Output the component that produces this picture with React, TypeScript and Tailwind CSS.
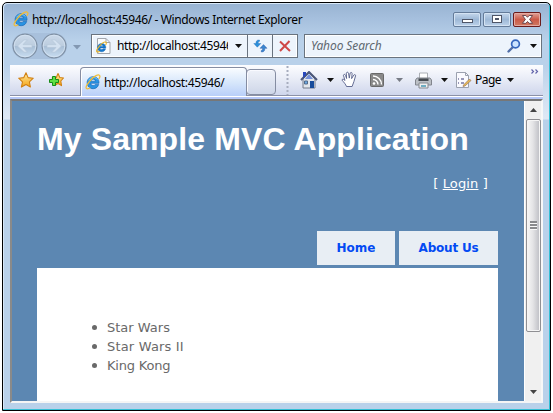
import React from "react";

const UI = "font-['Noto_Sans','Open_Sans',sans-serif]";

function Caret({ dim = false }: { dim?: boolean }) {
  return (
    <svg width="7" height="4" viewBox="0 0 7 4" className="shrink-0">
      <path d="M0 0h7L3.5 4z" fill={dim ? "#777b85" : "#111"} />
    </svg>
  );
}

function IeLogo({ size = 16 }: { size?: number }) {
  return (
    <svg width={size} height={size} viewBox="0 0 16 16" className="shrink-0">
      <path fillRule="evenodd" d="M14 9.300H5.800c.1 1.400 1.100 2.200 2.500 2.200 1 0 1.600-.4 2-1.100h3.400C12.900 13 11 14.700 8.200 14.700 4.700 14.700 2.100 12.200 2.100 8.700 2.100 5.200 4.700 2.700 8.200 2.700c3.700 0 6 2.600 5.800 6.600zM5.900 7.200h4.500C10.200 5.900 9.400 5.200 8.200 5.200S6.200 5.900 5.900 7.200z" fill="#2a93e2" stroke="#0f62b4" strokeWidth=".6" />
      <path d="M3.600 6.300C4.500 4.500 6.200 3.500 8.200 3.500c1.800 0 3.300.7 4.100 2" fill="none" stroke="#8ad6fa" strokeWidth=".9" />
      <path d="M13.800 5c1.300-2.100 1.400-3.300.6-3.800-1.500-1-5.500 1.200-8.900 5C2.100 10.100.4 13.500 1.500 14.500c.8.600 2.300.2 3.800-.7" fill="none" stroke="#f0bd38" strokeWidth="1.300" />
    </svg>
  );
}

function RoundArrow({ forward = false }: { forward?: boolean }) {
  return (
    <svg width="26" height="26" viewBox="0 0 26 26" className="shrink-0">
      <defs>
        <linearGradient id={forward ? "rf" : "rb"} x1="0" y1="0" x2="0" y2="1">
          <stop offset="0" stopColor="#cbd9e9" />
          <stop offset=".48" stopColor="#bccddf" />
          <stop offset=".52" stopColor="#a9bfd6" />
          <stop offset="1" stopColor="#c9def2" />
        </linearGradient>
      </defs>
      <circle cx="13" cy="13" r="11.900" fill={`url(#${forward ? "rf" : "rb"})`} stroke="#7f90a4" strokeWidth="1.200" />
      <circle cx="13" cy="13" r="10.800" fill="none" stroke="#d5e3f2" strokeWidth=".8" />
      <path
        transform={forward ? "translate(26 0) scale(-1 1)" : undefined}
        d="M5.500 13 12 6.800h3.500L11 11.600h9v2.900h-9l4.500 4.700H12z"
        fill="#d3e1f0"
        stroke="#b4c5d8"
        strokeWidth=".7"
      />
    </svg>
  );
}

function Star({ plus = false }: { plus?: boolean }) {
  return (
    <svg width="16" height="16" viewBox="0 0 16 16" className="shrink-0">
      <defs>
        <linearGradient id={plus ? "sp" : "ss"} x1="0" y1="0" x2="0" y2="1">
          <stop offset="0" stopColor="#ffe9a0" />
          <stop offset="1" stopColor="#f5a414" />
        </linearGradient>
      </defs>
      <path d={plus ? "M10 1.500 11.800 5.500l3.700.5-2.700 3 .7 4.600L10 11.500l-3.500 2 .7-4.500-3-3L8.300 5.500z" : "M8 .8 10.100 5.600l5.200.6-3.900 3.600 1 5.200L8 12.500l-4.600 2.600 1.100-5.200L.7 6.200l5.100-.6z"} fill={`url(#${plus ? "sp" : "ss"})`} stroke="#d18113" strokeWidth="1.100" strokeLinejoin="round" />
      {plus && <path d="M4.500 4.500h3v3h3v3h-3v3h-3v-3h-3v-3h3z" fill="#5ede42" stroke="#168a18" />}
    </svg>
  );
}

function CaptionButton({ kind }: { kind: "min" | "max" | "close" }) {
  const close = kind === "close";
  return (
    <div
      className={
        "flex h-[15px] w-[28px] items-center justify-center rounded-[2px] border bg-linear-to-b " +
        (close
          ? "border-[#6b1b1b] from-[#dfa198] from-0% via-[#cb5947] via-50% to-[#cf7a62] shadow-[inset_0_0_0_1px_#e4aaa2]"
          : "border-[#647b99] from-[#c5d7ec] via-[#9db8d6] via-50% to-[#bdd2ea] shadow-[inset_0_0_0_1px_#d4e3f3]")
      }
    >
      <svg width="13" height="11" viewBox="0 0 13 11">
        {kind === "min" && <rect x="1.500" y="5.500" width="10" height="3" fill="#fff" stroke="#4f5668" />}
        {kind === "max" && (
          <>
            <rect x="1.500" y="1.500" width="9" height="7" fill="#fff" stroke="#4f5668" />
            <rect x="4.500" y="4.500" width="3" height="1" fill="#a3bad4" stroke="#4f5668" />
          </>
        )}
        {close && <path d="M1.500 1.500h3.300L6.500 3.300l1.700-1.800h3.300L8.600 5.400l3 3.900H8.200L6.500 7.500 4.800 9.300H1.400l3-3.900z" fill="#fff" stroke="#5e3b44" strokeWidth=".9" />}
      </svg>
    </div>
  );
}

function TitleBar() {
  return (
    <div className="flex h-[28px] pl-[10px] pr-[9px]">
      <div className="mt-[8px]"><IeLogo size={16} /></div>
      <div className={`ml-[3px] mt-[8px] h-[18px] w-[290px] whitespace-nowrap text-[12px] leading-[18px] tracking-[-0.37px] text-black ${UI}`}>
        http://localhost:45946/ - Windows Internet Explorer
      </div>
      <div className="ml-auto mt-[9px] flex gap-[2px]">
        <CaptionButton kind="min" />
        <CaptionButton kind="max" />
        <CaptionButton kind="close" />
      </div>
    </div>
  );
}

function NavBar() {
  return (
    <div className="flex h-[34px] pl-[9px] pr-[8px] pt-[3px]">
      <div className="-mt-px flex h-[26px] gap-[3px] rounded-full bg-[#a8c0dc]">
        <RoundArrow />
        <RoundArrow forward />
      </div>
      <div className="ml-[6px] mt-[11px] w-[8px]">
        <svg width="8" height="5" viewBox="0 0 8 5"><path d="M0 0h8L4 4.500z" fill="#8398b2" /></svg>
      </div>
      <div className="ml-[10px] flex h-[24px] w-[207px] border border-[#69737f] bg-[#edf4fc] shadow-[inset_0_0_0_1px_#fff]">
        <div className="ml-[4px] mt-[3px] w-[16px]">
          <svg width="15" height="16" viewBox="0 0 15 16">
            <path d="M1.500.5h8.500l4 4v11h-12.500z" fill="#fbfcfd" stroke="#a2a7ae" />
            <path d="M10 .5v4h4" fill="none" stroke="#a2a7ae" />
            <g transform="translate(0 3.500) scale(.7)">
              <path fillRule="evenodd" d="M14 9.300H5.800c.1 1.400 1.100 2.200 2.500 2.200 1 0 1.600-.4 2-1.100h3.400C12.900 13 11 14.700 8.200 14.700 4.700 14.700 2.100 12.200 2.100 8.700 2.100 5.200 4.700 2.700 8.200 2.700c3.700 0 6 2.600 5.800 6.600zM5.900 7.200h4.500C10.200 5.900 9.400 5.200 8.200 5.200S6.200 5.900 5.900 7.200z" fill="#1579ce" stroke="#0b5fae" strokeWidth=".6" />
              <path d="M13.600 5.200c1.300-2.100 1.400-3.500.6-4-1.500-1-5.500 1.200-8.900 5C1.700 10.100 0 13.700 1.300 14.700c.8.600 2.500 0 4-.9" fill="none" stroke="#e5b32b" strokeWidth="1.600" />
            </g>
          </svg>
        </div>
        <div className={`ml-[5px] w-[111px] overflow-hidden whitespace-nowrap text-[12px] leading-[22px] tracking-[-0.38px] text-black ${UI}`}>http://localhost:45946/</div>
        <div className="flex w-[19px] items-center justify-end pr-[5px]"><Caret /></div>
        <div className="flex w-[25px] items-center justify-center border-l border-[#69737f]">
          <svg width="15" height="14" viewBox="0 0 15 14">
            <path d="M6.500 1C3.500.8 2.900 2.500 3 4.500H.8L4.300 8.200 7.800 4.500H5.200c0-1.400.2-2 1.300-2.200z" fill="#2b8fda" stroke="#1b68b5" strokeWidth=".4" />
            <path d="M8.300 13c3 .2 3.600-1.700 3.500-3.700H14L10.500 5.600 7 9.300h2.600c0 1.400-.2 2-1.300 2.200z" fill="#3c86cf" stroke="#1b4f9e" strokeWidth=".4" />
          </svg>
        </div>
        <div className="flex w-[25px] items-center justify-center border-l border-[#69737f]">
          <svg width="12" height="12" viewBox="0 0 12 12"><path d="m1 1.500 10 9.500M10.500 1 1 11" fill="none" stroke="#cf4847" strokeWidth="2" /></svg>
        </div>
      </div>
      <div className="ml-[6px] flex h-[24px] w-[238px] items-center border border-[#69737f] bg-[#edf4fc] shadow-[inset_0_0_0_1px_#fff]">
        <div className={`ml-[6px] w-[90px] whitespace-nowrap text-[12px] italic leading-[22px] tracking-[-0.1px] text-[#606870] ${UI}`}>Yahoo Search</div>
        <svg width="14" height="14" viewBox="0 0 14 14" className="ml-auto">
          <path d="M1.500 12.500 6 8" stroke="#526fa8" strokeWidth="2.400" strokeLinecap="round" />
          <circle cx="8.500" cy="5" r="3.900" fill="#cce4ff" stroke="#3767bd" strokeWidth="1.700" />
        </svg>
        <div className="ml-[9px] mr-[4px] flex"><Caret /></div>
      </div>
    </div>
  );
}

function Toolbar() {
  return (
    <div className="ml-[7px] mr-[7px] flex h-[31px] w-[533px] border-b border-[#8b91a8] bg-linear-to-b from-[#fdfdff] via-[#e7ebf6] via-50% to-[#cfd6ec]">
      <div className="mt-[7px] flex w-[70px] gap-[14px] pl-[8px]"><Star /><Star plus /></div>
      <div className="mt-[2px] flex h-[30px] w-[167px] rounded-t-[4px] border border-b-0 border-[#858da2] bg-linear-to-b from-[#f9fcff] via-[#d7e7fb] via-50% to-[#b7cdf9] pl-[4px] pt-[6px] shadow-[inset_1px_1px_0_#fff]">
        <IeLogo size={16} />
        <div className={`ml-[3px] h-[16px] whitespace-nowrap text-[12px] leading-[17px] tracking-[-0.34px] text-black ${UI}`}>http://localhost:45946/</div>
      </div>
      <div className="-ml-px mt-[4px] h-[26px] w-[30px] rounded-[4px] border border-[#858da2] bg-linear-to-b from-[#eff2f9] to-[#ced6e8] shadow-[inset_1px_1px_0_#f9faff]" />
      <svg width="3" height="30" viewBox="0 0 3 30" className="ml-[10px]"><path d="M1.500 1v29" stroke="#a7adbe" strokeWidth="2" strokeDasharray="2 2" /></svg>
      <svg width="18" height="18" viewBox="0 0 18 18" className="ml-[11px] mt-[6px]">
        <path d="M3 8v9h12V8L9 2z" fill="#e3e7ed" stroke="#747d8c" />
        <path d="m1 9 8-8 8 8" fill="none" stroke="#4b5779" strokeWidth="2" />
        <path d="M3 1h3v3L3 7z" fill="#2747bd" />
        <path d="m5 8 4-5 4 5z" fill="#7590d8" />
        <path d="M4.500 10h3v3h-3z" fill="#6daae4" stroke="#526b8b" />
        <path d="M10 10h4v7h-4z" fill="#174b9b" />
      </svg>
      <div className="ml-[9px] mt-[13px] flex w-[7px]"><Caret /></div>
      <svg width="17" height="17" viewBox="0 0 17 17" className="ml-[7px] mt-[6px]">
        <path d="M5.500 15.500C4.900 13.600 2.600 10.900 1 9.100c.3-1.500 1.700-1.200 3 .4L2.400 4.200c.5-1.300 1.700-1 2.200.3l1 3-.3-5.400c.5-1.300 1.900-1.100 2.200.1l.8 4.900L9.200 2c.7-1 2-.6 1.900.6l-.5 5L12.900 4c.9-.9 2-.1 1.600 1l-1.600 5.600-1.800 4.900z" fill="#fff" stroke="#555d88" strokeWidth=".9" strokeLinejoin="round" />
      </svg>
      <svg width="15" height="15" viewBox="0 0 15 15" className="ml-[12px] mt-[8px]">
        <rect x=".5" y=".5" width="13" height="13" rx="1" fill="#898989" stroke="#696969" />
        <circle cx="4" cy="10.500" r="1.300" fill="white" />
        <path d="M3 6.500a5 5 0 0 1 5 5M3 3a8.500 8.500 0 0 1 8.500 8.500" fill="none" stroke="#fff" strokeWidth="1.400" />
      </svg>
      <div className="ml-[11px] mt-[13px] flex w-[7px]"><Caret dim /></div>
      <svg width="17" height="17" viewBox="0 0 17 17" className="ml-[12px] mt-[7px]">
        <path d="M4.500 1h8v6h-8z" fill="#fff" stroke="#acb0b5" />
        <path d="M2 6h13l1.500 2v5H.5V8z" fill="#bbbfc5" stroke="#82868e" />
        <path d="M3.500 6.500h10V9h-10z" fill="#454a50" />
        <path d="M4 11h9v5H4z" fill="#eee" stroke="#858990" />
        <path d="M6 13h5v2H6z" fill="#70adc2" />
      </svg>
      <div className="ml-[9px] mt-[13px] flex w-[7px]"><Caret /></div>
      <svg width="17" height="17" viewBox="0 0 17 17" className="ml-[7px] mt-[7px]">
        <path d="M1.500.5h9l3 3v12h-12z" fill="#fafaff" stroke="#9ba1af" />
        <path d="M10.500.5v3h3" fill="none" stroke="#9ba1af" />
        <path d="M3 7h1M6 7h3M3 11h1M6 11h3" stroke="#7777a1" strokeWidth="1.500" />
        <path d="m8.500 13 6-6 1.500 1.500-6 5.500-2 .5z" fill="#e8ba56" stroke="#99755c" strokeWidth=".7" />
      </svg>
      <div className={`ml-[3px] mt-[6px] w-[31px] whitespace-nowrap text-[12px] leading-[17px] tracking-[-0.5px] text-black ${UI}`}>Page</div>
      <div className="ml-px mt-[13px] flex w-[7px]"><Caret /></div>
      <svg width="8" height="5" viewBox="0 0 8 5" className="ml-[17px] mt-[4px] shrink-0"><path d="m.5.5 2 2-2 2M4.500.5l2 2-2 2" fill="none" stroke="#6264aa" strokeWidth="1.200" /></svg>
    </div>
  );
}

function ScrollBar() {
  return (
    <div className="flex w-[17px] flex-col items-center border-l border-white bg-[#f0f0f0]">
      <div className="flex h-[18px] items-center justify-center">
        <svg width="7" height="4" viewBox="0 0 7 4"><path d="M0 4h7L3.500 0z" fill="#444" /></svg>
      </div>
      <div className="flex h-[213px] w-[15px] items-center justify-center rounded-[2px] border border-[#8f8f93] bg-linear-to-r from-[#f7f7f7] via-[#e4e4e6] via-45% to-[#bcbdc3] shadow-[inset_0_0_0_1px_#f5f5f5]">
        <svg width="7" height="9" viewBox="0 0 7 9">
          <path d="M0 1.500h7M0 4.500h7M0 7.500h7" stroke="#f9f9f9" strokeWidth="3" />
          <path d="M0 1h7M0 4h7M0 7h7" stroke="#64656a" strokeWidth="1.500" />
        </svg>
      </div>
      <div className="mt-auto flex h-[18px] items-center justify-center">
        <svg width="7" height="4" viewBox="0 0 7 4"><path d="M0 0h7L3.500 4z" fill="#444" /></svg>
      </div>
    </div>
  );
}

function WebPage() {
  return (
    <div className="flex w-[512px] flex-col bg-[#5c87b2] font-['DejaVu_Sans',Verdana,sans-serif] text-[13px] text-[#696969]">
      <h1 className="ml-[25px] mt-[18px] h-[40px] whitespace-nowrap font-['Liberation_Sans',Arial,sans-serif] text-[32px] font-bold leading-[40px] tracking-[0.11px] text-white">
        My Sample MVC Application
      </h1>
      <div className="mr-[36px] mt-[15px] h-[20px] self-end whitespace-nowrap text-[13px] leading-[20px] tracking-[0.15px] text-white">
        [ <a className="underline">Login</a> ]
      </div>
      <nav className="mr-[26px] mt-[37px] flex h-[34px] gap-[4px] self-end whitespace-nowrap text-[12px] font-bold leading-[34px] text-[#034af3]">
        <a className="w-[78px] bg-[#e8eef4] text-center">Home</a>
        <a className="w-[99px] bg-[#e8eef4] text-center tracking-[-0.2px]">About Us</a>
      </nav>
      <main className="ml-[25px] mr-[26px] mt-[3px] min-h-0 flex-1 bg-white pt-[50px]">
        <ul className="pl-[55px] leading-[19px]">
          {[
            ["Star Wars", ""],
            ["Star Wars II", "tracking-[0.18px]"],
            ["King Kong", "tracking-[-0.2px]"],
          ].map(([title, spacing]) => (
            <li key={title} className={`flex h-[19px] items-center whitespace-nowrap ${spacing}`}>
              <span className="mr-[10px] size-[5px] rounded-full bg-[#696969]" />
              {title}
            </li>
          ))}
        </ul>
      </main>
    </div>
  );
}

export default function App() {
  return (
    <div className="h-[413px] w-[553px] overflow-hidden bg-white pl-[2px] pt-[2px]">
      <div className="flex h-[409px] w-[549px] flex-col overflow-hidden rounded-t-[5px] border border-black bg-[linear-gradient(to_bottom,#98b3d2_0px,#a5bfdd_15px,#b9d1ea_38px,#b9d1ea_62px,#cfdef0_90px,#dfe9f5_116px,#b9d1ea_117px)] shadow-[inset_-1px_-1px_0_#35bfd5,inset_1px_1px_0_#d8e8f8]">
        <TitleBar />
        <NavBar />
        <Toolbar />
        <div className="ml-[7px] h-[3px] w-[533px] shrink-0 border-t border-white bg-[#b7c8f8]" />
        <div className="ml-[7px] flex h-[304px] w-[533px] shrink-0 border-2 border-b-2 border-l-[#8a8a8a] border-t-[#777] border-b-[#f5f5f5] border-r-[#f8f8f8]">
          <WebPage />
          <ScrollBar />
        </div>
      </div>
    </div>
  );
}
